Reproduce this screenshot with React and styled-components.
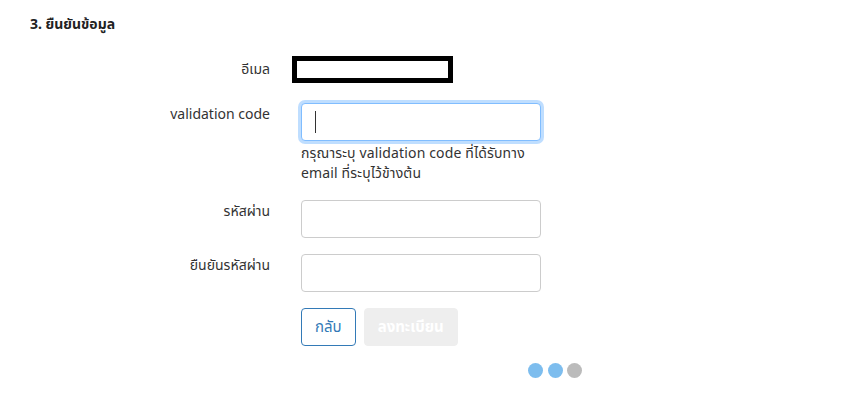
import React from "react";
import styled, { createGlobalStyle } from "styled-components";

const Global = createGlobalStyle`
  html, body { margin: 0; padding: 0; background: #fff; }
  body { font-family: "Noto Sans", "Noto Sans Thai", "Noto Sans Thai UI", sans-serif; color: #333; font-size: 14px; }
`;

const Page = styled.div`
  padding: 14px 0 0 30px;
`;

const Heading = styled.h3`
  margin: 0 0 22px;
  font-size: 14px;
  font-weight: 700;
  line-height: 20px;
  color: #222;
`;

const Form = styled.div`
  display: grid;
  grid-template-columns: 240px 240px;
  column-gap: 31px;
  row-gap: 16px;
  align-items: start;
`;

const Label = styled.label`
  text-align: right;
  line-height: 20px;
  padding-top: ${(p) => p.$top || 0}px;
  color: #333;
`;

const Field = styled.div`
  display: flex;
  flex-direction: column;
  margin-bottom: ${(p) => p.$after || 0}px;
`;

const Redacted = styled.div`
  margin-left: -9px;
  width: 151px;
  height: 17px;
  border: 5px solid #000;
  background: #fff;
`;

const Input = styled.input`
  box-sizing: border-box;
  width: 240px;
  height: 38px;
  border: 1px solid ${(p) => (p.$focus ? "#80bdff" : "#ccc")};
  border-radius: 4px;
  padding: 6px 12px;
  font: inherit;
  outline: none;
  box-shadow: ${(p) => (p.$focus ? "0 0 0 3px rgba(0,123,255,0.25)" : "none")};
`;

const Caret = styled.span`
  position: absolute;
  left: 14px;
  top: 8px;
  width: 1px;
  height: 22px;
  background: #333;
`;

const InputWrap = styled.div`
  position: relative;
  width: 240px;
`;

const Help = styled.div`
  margin-top: 2px;
  line-height: 20px;
  letter-spacing: 0.15px;
  color: #333;
`;

const Buttons = styled.div`
  display: flex;
  gap: 8px;
`;

const Button = styled.button`
  box-sizing: border-box;
  height: 38px;
  padding: 0 13px;
  border-radius: 4px;
  font: inherit;
  font-size: 15px;
  border: 1px solid ${(p) => (p.$disabled ? "#eeeeee" : "#337ab7")};
  background: ${(p) => (p.$disabled ? "#eeeeee" : "#fff")};
  color: ${(p) => (p.$disabled ? "#fff" : "#337ab7")};
  font-weight: ${(p) => (p.$disabled ? 700 : 400)};
`;

const Dots = styled.div`
  display: flex;
  gap: 4.5px;
  margin: 17px 0 0 227px;
`;

const Dot = styled.span`
  flex: 0 0 15px;
  width: 15px;
  height: 15px;
  border-radius: 50%;
  background: ${(p) => (p.$on ? "#7dbdee" : "#bbbbbb")};
`;

export default function App() {
  return (
    <>
      <Global />
      <Page>
        <Heading>3. ยืนยันข้อมูล</Heading>
        <Form>
          <Label $top={3}>อีเมล</Label>
          <Field $after={4}>
            <Redacted />
          </Field>

          <Label $top={1}>validation code</Label>
          <Field $after={1}>
            <InputWrap>
              <Input $focus />
              <Caret />
            </InputWrap>
            <Help>
              กรุณาระบุ validation code ที่ได้รับทาง
              <br />
              email ที่ระบุไว้ข้างต้น
            </Help>
          </Field>

          <Label $top={1}>รหัสผ่าน</Label>
          <Field>
            <Input type="password" />
          </Field>

          <Label $top={1}>ยืนยันรหัสผ่าน</Label>
          <Field>
            <Input type="password" />
          </Field>

          <span />
          <Field>
            <Buttons>
              <Button>กลับ</Button>
              <Button $disabled>ลงทะเบียน</Button>
            </Buttons>
            <Dots>
              <Dot $on />
              <Dot $on />
              <Dot />
            </Dots>
          </Field>
        </Form>
      </Page>
    </>
  );
}
